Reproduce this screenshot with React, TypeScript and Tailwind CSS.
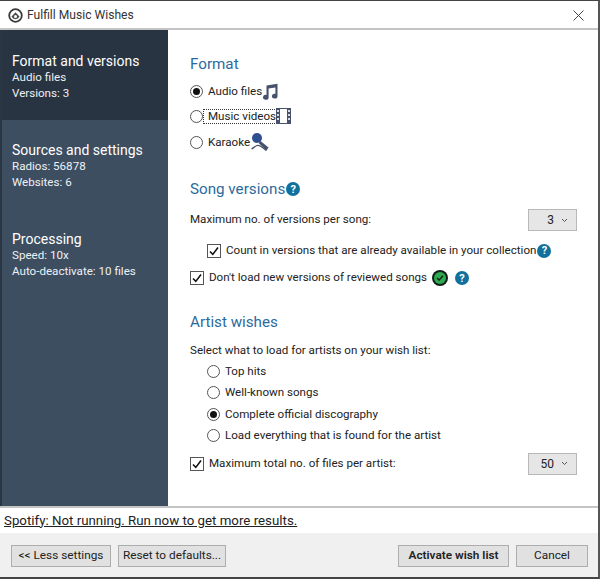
import React from 'react';

const FONT = "font-['Roboto','Open_Sans',sans-serif]";

const Radio = ({ checked, label }: { checked?: boolean; label: React.ReactNode }) => (
  <div className="flex items-center gap-[5px]">
    <span className="w-[13px] h-[13px] rounded-full border border-[#555] bg-white flex items-center justify-center shrink-0">
      {checked && <span className="w-[7px] h-[7px] rounded-full bg-[#111]" />}
    </span>
    {label}
  </div>
);

const Check = ({ label }: { label: string }) => (
  <div className="flex items-center gap-[5px]">
    <span className="w-[14px] h-[14px] border border-[#555] bg-white flex items-center justify-center shrink-0">
      <svg width="10" height="10" viewBox="0 0 10 10" fill="none">
        <path d="M1 5.5 L3.8 8.4 L9 1.6" stroke="#111" strokeWidth="1.6" />
      </svg>
    </span>
    <span>{label}</span>
  </div>
);

const Help = () => (
  <span className="w-[14px] h-[14px] rounded-full bg-[#11709c] text-white text-[11px] font-bold leading-none flex items-center justify-center shrink-0">?</span>
);

const Select = ({ value }: { value: string }) => (
  <div className="w-[49px] h-[22px] bg-[#e6e6e6] border border-[#b8b8b8] flex items-center justify-end gap-[7px] pr-[8px] text-[12px] text-[#222]">
    <span>{value}</span>
    <svg width="7" height="5" viewBox="0 0 7 5" fill="none">
      <path d="M1 1 L3.5 3.5 L6 1" stroke="#555" strokeWidth="1" />
    </svg>
  </div>
);

const Heading = ({ children }: { children: React.ReactNode }) => (
  <div className="flex items-center gap-[1px] text-[15.2px] leading-[20px] text-[#2c6a9e]">{children}</div>
);

const NavItem = ({ title, lines, active, className }: { title: string; lines: string[]; active?: boolean; className: string }) => (
  <div className={`${className} ${active ? 'bg-[#293442]' : ''} pl-[10px] text-white`}>
    <div className="text-[14px] leading-[16px]">{title}</div>
    {lines.map(l => (
      <div key={l} className="text-[11.6px] leading-[16px] text-[#eef1f4]">{l}</div>
    ))}
  </div>
);

const Button = ({ children, className }: { children: React.ReactNode; className: string }) => (
  <div className={`h-[22px] bg-[#e1e1e1] border border-[#adadad] flex items-center justify-center text-[11.8px] text-[#222] ${className}`}>{children}</div>
);

export default function App() {
  return (
    <div className={`${FONT} w-[600px] h-[579px] bg-white flex flex-col border-t border-t-[#444] border-b-2 border-b-[#444] border-r-2 border-r-[#555] text-[11.6px] text-[#222] overflow-hidden`}>
      <div className="h-[25px] pt-[2px] flex items-center pl-[8px] pr-[14px] shrink-0 border-b-2 border-b-[#c4c4c4] box-content">
        <svg width="15" height="15" viewBox="0 0 15 15" fill="none">
          <circle cx="7.5" cy="7.5" r="6.3" stroke="#3a3a3a" strokeWidth="1.8" />
          <path d="M3.5 8.6 L7.5 4.2 L11.5 8.6 A4.4 4.4 0 0 1 3.5 8.6 Z" fill="#4a4a4a" />
          <circle cx="7.5" cy="8.4" r="1.5" fill="#fff" />
        </svg>
        <span className="ml-[4px] text-[12.1px] text-[#333]">Fulfill Music Wishes</span>
        <svg className="ml-auto" width="11" height="11" viewBox="0 0 11 11" fill="none">
          <path d="M0.5 0.5 L10.5 10.5 M10.5 0.5 L0.5 10.5" stroke="#444" strokeWidth="1" />
        </svg>
      </div>

      <div className="flex flex-1 min-h-0">
        <div className="w-[168px] shrink-0 bg-[#3d4e61] border-l-2 border-l-[#2b3644] flex flex-col">
          <NavItem active className="h-[90px] pt-[23px]" title="Format and versions" lines={['Audio files', 'Versions: 3']} />
          <NavItem className="h-[90px] pt-[22px]" title="Sources and settings" lines={['Radios: 56878', 'Websites: 6']} />
          <NavItem className="pt-[21px]" title="Processing" lines={['Speed: 10x', 'Auto-deactivate: 10 files']} />
        </div>

        <div className="flex-1 pl-[22px] pr-[21px] pt-[24px]">
          <Heading>Format</Heading>
          <div className="flex flex-col gap-[8px] mt-[9px] leading-[17px]">
            <Radio checked label={
              <span className="flex items-center gap-[1px]">Audio files
                <svg width="15" height="17" viewBox="0 0 15 17" fill="#46516b">
                  <path d="M3.5 2.5 L14.5 0.8 V13 A2.8 2.4 0 1 1 12.4 10.8 V4.6 L5.6 5.6 V14.2 A2.8 2.4 0 1 1 3.5 12 Z" />
                </svg>
              </span>
            } />
            <Radio label={
              <span className="flex items-center -ml-[5px]">
                <span className="border border-dotted border-[#333] pl-[4px] h-[15px] flex items-center">Music videos</span>
                <svg className="-ml-[1px]" width="15" height="16" viewBox="0 0 15 16" fill="none">
                  <rect x="0.5" y="0.5" width="14" height="15" stroke="#46516b" fill="#fff" />
                  <path d="M0 0 H4 V16 H0 Z M11 0 H15 V16 H11 Z" fill="#46516b" />
                  <path d="M1.2 2 H2.8 V4 H1.2 Z M1.2 6 H2.8 V8 H1.2 Z M1.2 10 H2.8 V12 H1.2 Z M12.2 2 H13.8 V4 H12.2 Z M12.2 6 H13.8 V8 H12.2 Z M12.2 10 H13.8 V12 H12.2 Z" fill="#fff" />
                </svg>
              </span>
            } />
            <Radio label={
              <span className="flex items-center gap-[1px]">Karaoke
                <svg width="20" height="21" viewBox="0 0 20 21" fill="none">
                  <circle cx="6" cy="6" r="5" fill="#2f4f8f" />
                  <path d="M9.5 9 L17.5 15.5 L15.5 18.5 L7.5 11 Z" fill="#46516b" />
                  <path d="M15.5 18.5 C13 17 9 12.5 6 13.5 C3.5 14.5 2 16.5 0.5 17" stroke="#46516b" strokeWidth="1.3" />
                </svg>
              </span>
            } />
          </div>

          <div className="mt-[26px]">
            <Heading>Song versions<Help /></Heading>
          </div>
          <div className="flex items-center justify-between mt-[10px]">
            <span>Maximum no. of versions per song:</span>
            <Select value="3" />
          </div>
          <div className="flex items-center gap-[1px] mt-[11px] ml-[17px]">
            <Check label="Count in versions that are already available in your collection" />
            <Help />
          </div>
          <div className="flex items-center mt-[10px]">
            <Check label="Don't load new versions of reviewed songs" />
            <span className="ml-[5px] w-[16px] h-[16px] rounded-full bg-[#0f1f17] flex items-center justify-center">
              <span className="w-[12px] h-[12px] rounded-full bg-[#2fa84f] flex items-center justify-center">
                <svg width="8" height="8" viewBox="0 0 8 8" fill="none">
                  <path d="M1 4 L3.2 6 L7 1.8" stroke="#0f1f17" strokeWidth="1.4" />
                </svg>
              </span>
            </span>
            <span className="ml-[7px]"><Help /></span>
          </div>

          <div className="mt-[25px]">
            <Heading>Artist wishes</Heading>
          </div>
          <div className="mt-[10px] leading-[17px]">Select what to load for artists on your wish list:</div>
          <div className="flex flex-col gap-[4.4px] mt-[4px] ml-[17px] leading-[17px]">
            <Radio label={<span>Top hits</span>} />
            <Radio label={<span>Well-known songs</span>} />
            <Radio checked label={<span>Complete official discography</span>} />
            <Radio label={<span>Load everything that is found for the artist</span>} />
          </div>
          <div className="flex items-center justify-between mt-[9px]">
            <Check label="Maximum total no. of files per artist:" />
            <Select value="50" />
          </div>
        </div>
      </div>

      <div className="h-[25px] shrink-0 border-t-2 border-t-[#c4c4c4] box-content pl-[4px] flex items-center text-[13.3px] text-[#222] underline">
        Spotify: Not running. Run now to get more results.
      </div>
      <div className="h-[44px] shrink-0 bg-[#f0f0f0] flex items-center pl-[11px] pr-[10px] pt-[2px] gap-[7px]">
        <Button className="w-[100px]">&lt;&lt; Less settings</Button>
        <Button className="w-[108px]">Reset to defaults...</Button>
        <Button className="w-[111px] ml-auto border-[#2f86b8] font-semibold text-[#111]">Activate wish list</Button>
        <Button className="w-[72px]">Cancel</Button>
      </div>
    </div>
  );
}
